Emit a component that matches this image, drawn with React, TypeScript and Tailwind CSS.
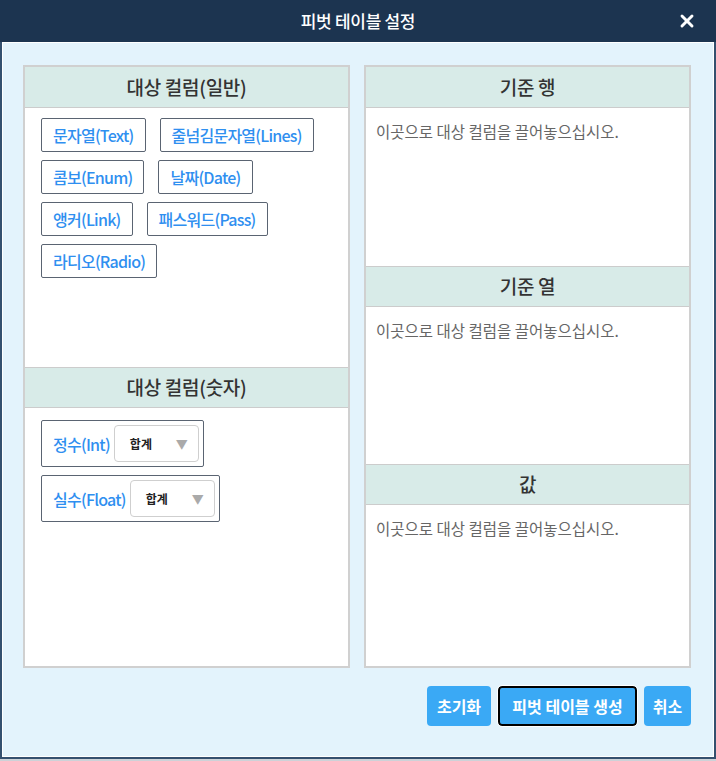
import React from "react";
import { X } from "lucide-react";

const font = { fontFamily: '"Noto Sans CJK KR", "Noto Sans", sans-serif' };

const textColumns = [
  ["문자열(Text)", "줄넘김문자열(Lines)"],
  ["콤보(Enum)", "날짜(Date)"],
  ["앵커(Link)", "패스워드(Pass)"],
  ["라디오(Radio)"],
];

const numberColumns = ["정수(Int)", "실수(Float)"];

function SectionHeader({ title, top }: { title: string; top?: boolean }) {
  return (
    <div
      className={
        "h-[41px] shrink-0 flex items-center justify-center bg-[#d8ebe8] border-b border-[#cccccc] text-[19px] font-medium text-[#333] tracking-[-0.3px] " +
        (top ? "border-t" : "")
      }
    >
      {title}
    </div>
  );
}

function DropHint() {
  return (
    <div className="px-[10px] pt-[12px] text-[15.5px] text-[#666]">
      이곳으로 대상 컬럼을 끌어놓으십시오.
    </div>
  );
}

function AggSelect() {
  return (
    <div className="w-[85px] h-[37px] bg-white border border-[#cfcfcf] rounded-[4px] flex items-center pl-[15px] pr-[10px] justify-between">
      <span className="text-[12px] font-bold text-[#222]">합계</span>
      <span className="text-[12px] text-[#aaa]">▼</span>
    </div>
  );
}

export default function App() {
  return (
    <div className="w-[716px] h-[761px] bg-[#cdd2d8]" style={font}>
      <div className="w-[716px] h-[759px] flex flex-col border-x-2 border-b-2 border-[#34506f]">
        {/* title bar */}
        <div className="h-[42px] shrink-0 bg-[#1c3450] -mx-[2px] relative flex items-center justify-center">
          <span className="text-white text-[17px] font-medium tracking-[-0.3px]">피벗 테이블 설정</span>
          <X className="absolute right-[19px] top-[11px] text-white" size={20} strokeWidth={3.5} />
        </div>

        <div className="flex-1 bg-[#e3f3fc] border border-white pl-[20px] pr-[22px] pt-[22px] flex flex-col">
          <div className="h-[603px] grid grid-cols-2 gap-[14px]">
            {/* left: source columns */}
            <div className="bg-white border-2 border-[#d0d0d0] flex flex-col">
              <div className="h-[300px] flex flex-col">
                <SectionHeader title="대상 컬럼(일반)" />
                <div className="pl-[16px] pt-[10px] flex flex-col gap-[8px]">
                  {textColumns.map((row, i) => (
                    <div key={i} className="flex gap-[14px]">
                      {row.map((c) => (
                        <div
                          key={c}
                          className="h-[34px] px-[11px] flex items-center border border-[#5a6472] rounded-[2px] text-[16px] font-medium text-[#2f8ff0] tracking-[-0.75px]"
                        >
                          {c}
                        </div>
                      ))}
                    </div>
                  ))}
                </div>
              </div>
              <div className="flex-1 flex flex-col">
                <SectionHeader title="대상 컬럼(숫자)" top />
                <div className="pl-[16px] pt-[12px] flex flex-col gap-[8px] items-start">
                  {numberColumns.map((c) => (
                    <div
                      key={c}
                      className="h-[47px] pl-[11px] pr-[4px] flex items-center gap-[4px] border border-[#5a6472] rounded-[2px]"
                    >
                      <span className="text-[16px] font-medium text-[#2f8ff0] tracking-[-0.75px]">{c}</span>
                      <AggSelect />
                    </div>
                  ))}
                </div>
              </div>
            </div>

            {/* right: drop targets */}
            <div className="bg-white border-2 border-[#d0d0d0] flex flex-col">
              <div className="h-[199px] flex flex-col">
                <SectionHeader title="기준 행" />
                <DropHint />
              </div>
              <div className="h-[198px] flex flex-col">
                <SectionHeader title="기준 열" top />
                <DropHint />
              </div>
              <div className="flex-1 flex flex-col">
                <SectionHeader title="값" top />
                <DropHint />
              </div>
            </div>
          </div>

          <div className="mt-[18px] flex justify-end gap-[7px] text-white text-[16px] font-bold">
            <button className="h-[40px] w-[64px] bg-[#3aa9f5] rounded-[4px]">초기화</button>
            <button className="h-[40px] w-[139px] bg-[#3aa9f5] rounded-[4px] border-2 border-black outline outline-1 outline-white">
              피벗 테이블 생성
            </button>
            <button className="h-[40px] w-[47px] bg-[#3aa9f5] rounded-[4px]">취소</button>
          </div>
        </div>
      </div>
    </div>
  );
}
